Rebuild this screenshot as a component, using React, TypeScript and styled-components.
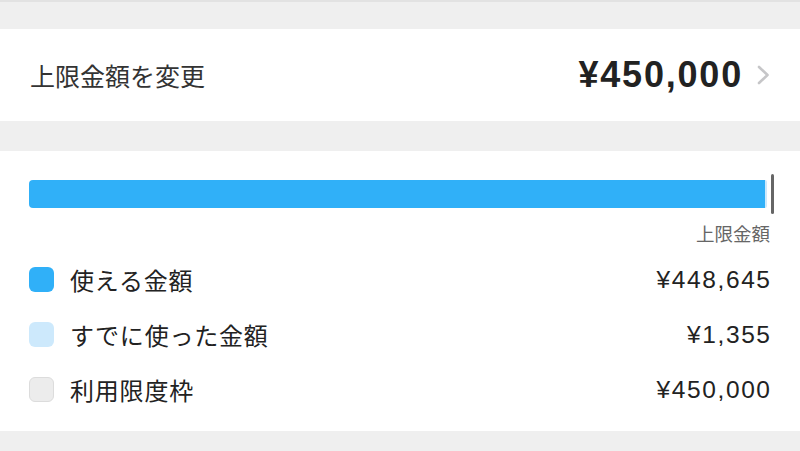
import React from "react";
import styled, { createGlobalStyle } from "styled-components";

const Global = createGlobalStyle`
  html, body { margin: 0; padding: 0; background: #efefef; }
  body { font-family: "Liberation Sans", "Noto Sans CJK JP", sans-serif; -webkit-font-smoothing: antialiased; }
  #root { width: 800px; height: 451px; overflow: hidden; }
`;

const Page = styled.div`
  width: 800px;
  height: 451px;
  background: #efefef;
  border-top: 2px solid #e2e2e2;
  box-sizing: border-box;
  display: flex;
  flex-direction: column;
  padding-top: 27px;
`;

const LimitRow = styled.div`
  height: 92px;
  background: #fff;
  display: flex;
  align-items: center;
  justify-content: space-between;
  padding: 0 30px 0 30px;
  box-sizing: border-box;
`;

const RowTitle = styled.span`
  font-size: 25px;
  color: #333;
`;

const RowValue = styled.div`
  display: flex;
  align-items: center;
  gap: 14px;
`;

const BigAmount = styled.span`
  font-size: 36px;
  font-weight: 700;
  letter-spacing: 1.8px;
  color: #222;
`;

const Spacer = styled.div`
  height: 30px;
  flex: none;
`;

const Card = styled.div`
  height: 280px;
  background: #fff;
  padding: 29px 30px 0 29px;
  box-sizing: border-box;
  display: flex;
  flex-direction: column;
`;

const Track = styled.div`
  position: relative;
  height: 28px;
  display: flex;
  padding-right: 7px;
  margin-right: -4px;
`;

const Segment = styled.div<{ $color: string; $radius: string }>`
  height: 100%;
  background: ${(p) => p.$color};
  border-radius: ${(p) => p.$radius};
`;

const Marker = styled.div`
  position: absolute;
  right: 0;
  top: -6px;
  width: 3px;
  height: 40px;
  border-radius: 2px;
  background: #666;
`;

const LimitLabel = styled.div`
  align-self: flex-end;
  margin-top: 17px;
  font-size: 18.5px;
  line-height: 20px;
  color: #666;
`;

const Legend = styled.div`
  margin-top: 7px;
  display: flex;
  flex-direction: column;
`;

const LegendRow = styled.div`
  height: 55px;
  display: flex;
  align-items: center;
`;

const Swatch = styled.div<{ $color: string; $border?: string }>`
  width: 25px;
  height: 25px;
  border-radius: 6px;
  box-sizing: border-box;
  background: ${(p) => p.$color};
  border: ${(p) => (p.$border ? `1px solid ${p.$border}` : "none")};
  margin-right: 16px;
  flex: none;
`;

const LegendName = styled.span`
  font-size: 24px;
  letter-spacing: 0.8px;
  color: #222;
  flex: 1;
`;

const LegendAmount = styled.span`
  font-size: 24.5px;
  letter-spacing: 1.6px;
  margin-right: -1.6px;
  color: #222;
`;

const Chevron = () => (
  <svg width="13" height="20" viewBox="0 0 13 20">
    <path d="M2 2 L10.5 10 L2 18" fill="none" stroke="#c6c6c8" strokeWidth="2.6" strokeLinecap="round" strokeLinejoin="round" />
  </svg>
);

const limit = 450000;
const used = 1355;
const available = limit - used;

const legend = [
  { name: "使える金額", amount: available, color: "#30b0f8" },
  { name: "すでに使った金額", amount: used, color: "#cde9fc" },
  { name: "利用限度枠", amount: limit, color: "#ececec", border: "#dcdcdc" },
];

const yen = (n: number) => "¥" + n.toLocaleString("en-US");

export default function App() {
  const availPct = (available / limit) * 100;
  const usedPct = (used / limit) * 100;
  return (
    <>
      <Global />
      <Page>
        <LimitRow>
          <RowTitle>上限金額を変更</RowTitle>
          <RowValue>
            <BigAmount>{yen(limit)}</BigAmount>
            <Chevron />
          </RowValue>
        </LimitRow>
        <Spacer />
        <Card>
          <Track>
            <Segment $color="#30b0f8" $radius="4px 0 0 4px" style={{ width: `${availPct}%` }} />
            <Segment $color="#cde9fc" $radius="0 4px 4px 0" style={{ width: `${usedPct}%` }} />
            <Marker />
          </Track>
          <LimitLabel>上限金額</LimitLabel>
          <Legend>
            {legend.map((l) => (
              <LegendRow key={l.name}>
                <Swatch $color={l.color} $border={l.border} />
                <LegendName>{l.name}</LegendName>
                <LegendAmount>{yen(l.amount)}</LegendAmount>
              </LegendRow>
            ))}
          </Legend>
        </Card>
      </Page>
    </>
  );
}
